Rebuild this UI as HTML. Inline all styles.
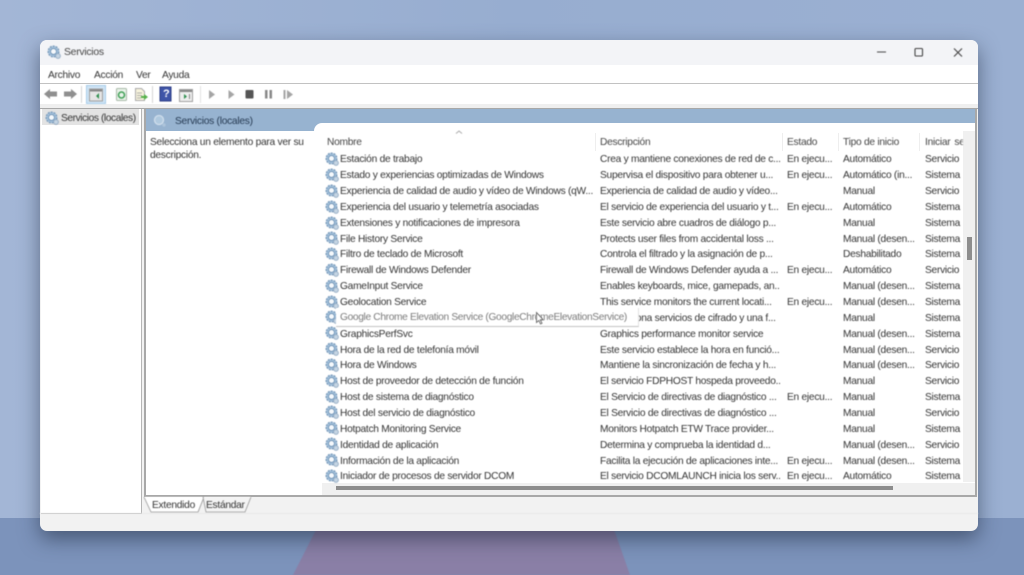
<!DOCTYPE html>
<html lang="es"><head><meta charset="utf-8"><title>Servicios</title>
<style>
html,body{margin:0;padding:0;width:1024px;height:575px;overflow:hidden}
body{position:relative;background:#9aafd1;font-family:"Liberation Sans",sans-serif;font-size:10.2px;letter-spacing:-.26px;color:#333}
div,span{position:absolute;white-space:nowrap}
#t{filter:blur(.4px)}
.c{overflow:hidden;height:14px;line-height:14px}
div[style*="left:925px"]{word-spacing:1.5px}
svg{position:absolute;overflow:visible;filter:blur(.4px)}
</style></head><body>
<div style="left:0;top:0;width:1024px;height:518px;background:linear-gradient(90deg,#a3b6d6,#97add0 50%,#9bb0d2)"></div>
<div style="left:0;top:518px;width:1024px;height:57px;background:#7c93bb"></div>
<svg style="left:0;top:0" width="1024" height="575"><polygon points="322,518 610,518 630,575 293,575" fill="#8a7fa6"/></svg>
<div style="left:40px;top:40px;width:938px;height:491px;background:#f2f2f2;border-radius:7px;box-shadow:0 8px 20px rgba(30,40,60,.55)"></div>
<div style="left:40px;top:40px;width:938px;height:25px;background:#f3f4f7;border-radius:7px 7px 0 0"></div>
<div style="left:40px;top:65px;width:938px;height:18px;background:#fff"></div>
<div style="left:40px;top:83px;width:938px;height:1px;background:#c2c2c2"></div>
<div style="left:40px;top:84px;width:938px;height:20px;background:#fff"></div>
<div style="left:40px;top:104px;width:938px;height:4px;background:#efefef"></div>
<div style="left:40px;top:108px;width:938px;height:1px;background:#a8a8a8"></div>
<div style="left:41px;top:109px;width:100px;height:404px;background:#fff;border:solid #b5b5b5;border-width:0 1px 1px 0"></div>
<div style="left:42px;top:109px;width:97px;height:16px;background:#e3e3e3"></div>
<div style="left:144px;top:108px;width:829px;height:386px;background:#fff;border:2px solid #a8a8a8;border-top-width:1px"></div>
<div style="left:146px;top:109px;width:829px;height:22px;background:#97b3d0"></div>
<div style="left:314px;top:123px;width:661px;height:30px;background:#fff;border-radius:8px 0 0 0"></div>
<div style="left:963px;top:131px;width:12px;height:351px;background:#f0f0f0"></div>
<div style="left:967px;top:237px;width:5px;height:23px;background:#8d8d8d"></div>
<div style="left:322px;top:483px;width:653px;height:12px;background:#f0f0f0"></div>
<div style="left:336px;top:486px;width:557px;height:4px;background:#8d8d8d"></div>
<div style="left:595px;top:133px;width:1px;height:18px;background:#eee"></div>
<div style="left:782px;top:133px;width:1px;height:18px;background:#eee"></div>
<div style="left:838px;top:133px;width:1px;height:18px;background:#eee"></div>
<div style="left:919px;top:133px;width:1px;height:18px;background:#eee"></div>

<svg style="left:0;top:0" width="1024" height="575">
<defs><g id="g">
<circle cx="6.5" cy="6.500" r="5.300" fill="#a8c5df" stroke="#7b9cbc" stroke-width="1.500" stroke-dasharray="2 1"/>
<circle cx="6.500" cy="6.500" r="3" fill="#f6f9fc" stroke="#6f93b5" stroke-width=".9"/>
<circle cx="11" cy="11" r="2.400" fill="#c4d4e3" stroke="#8ea6be" stroke-width=".8"/>
</g></defs>
<use href="#g" x="47" y="45"/>
<use href="#g" x="45" y="111"/>
<g opacity=".75"><circle cx="159" cy="120" r="4.500" fill="#b9d0e4" stroke="#e4eef6" stroke-width="1.300"/><circle cx="164" cy="125" r="1.700" fill="#b4cade"/></g>
<use href="#g" x="325" y="152"/><use href="#g" x="325" y="168"/><use href="#g" x="325" y="184"/><use href="#g" x="325" y="200"/><use href="#g" x="325" y="216"/><use href="#g" x="325" y="231"/><use href="#g" x="325" y="247"/><use href="#g" x="325" y="263"/><use href="#g" x="325" y="279"/><use href="#g" x="325" y="295"/><use href="#g" x="325" y="310"/><use href="#g" x="325" y="326"/><use href="#g" x="325" y="342"/><use href="#g" x="325" y="358"/><use href="#g" x="325" y="374"/><use href="#g" x="325" y="390"/><use href="#g" x="325" y="405"/><use href="#g" x="325" y="421"/><use href="#g" x="325" y="437"/><use href="#g" x="325" y="453"/><use href="#g" x="325" y="469"/>
<path d="M456 133.500l3-2.500 3 2.500" fill="none" stroke="#aaa"/>
<path d="M877 52h9" stroke="#555" stroke-width="1.100"/>
<rect x="915" y="48.500" width="7.500" height="7.500" rx="1" fill="none" stroke="#444" stroke-width="1.100"/>
<path d="M954 48.500l8 8M962 48.500l-8 8" stroke="#444" stroke-width="1.100"/>
<path d="M44 94l6-5v2.500h7v5h-7V99z" fill="#8f8f8f"/>
<path d="M77 94l-6-5v2.500h-7v5h7V99z" fill="#8f8f8f"/>
<path d="M81.500 86v17" stroke="#d5d5d5"/>
<rect x="86.500" y="85.500" width="19" height="18" fill="#cfe4f5" stroke="#a8cce8"/>
<rect x="89.500" y="89" width="13" height="12" fill="#e5e5e5" stroke="#9f9f9f"/><path d="M90 90.500h12" stroke="#888" stroke-width="2"/><path d="M99 93v6l-3-3z" fill="#2f8f4f"/>
<rect x="116.500" y="88.500" width="10" height="12" rx="1" fill="#e9f3e9" stroke="#a9b9a9"/><circle cx="121.500" cy="95" r="3" fill="none" stroke="#3f9f55" stroke-width="1.500"/>
<path d="M135.500 88.500h6l3 3v9h-9z" fill="#f7f3dd" stroke="#aaa"/><path d="M137 93h5M137 95.500h5M137 98h4" stroke="#999" stroke-width=".7"/><path d="M141 96h3v-2l4 3-4 3v-2h-3z" fill="#55b04a"/>
<path d="M152.500 86v17" stroke="#d5d5d5"/>
<rect x="160" y="87" width="11" height="14" fill="#3f55a8" stroke="#2d3d86"/>
<rect x="179.500" y="89.500" width="13" height="12" fill="#eee" stroke="#9f9f9f"/><path d="M180 91h12" stroke="#888" stroke-width="2"/><path d="M184 94v5l3-2.500z" fill="#2f8f4f"/><path d="M189.500 94v5" stroke="#888"/>
<path d="M200.500 86v17" stroke="#e2e2e2"/>
<path d="M209 90v9l6-4.500z" fill="#a5a5a5"/>
<path d="M228.500 90v9l6-4.500z" fill="#a5a5a5"/>
<rect x="245.500" y="90" width="8" height="8.500" rx="1" fill="#555"/>
<path d="M265 90h2.500v8.500H265zM269.500 90h2.500v8.500h-2.500z" fill="#888"/>
<path d="M283.500 90h2v9h-2zM287 90v9l6-4.500z" fill="#a5a5a5"/>
<path d="M198 512L204 497" fill="none" stroke="#999" stroke-width=".8"/>
<path d="M144 497l7 15h47l6-15z" fill="#fff"/>
<path d="M144 497l7 15h47l6-15" fill="none" stroke="#999" stroke-width=".8"/>
<path d="M204 497l-1 0 3 15h39l6-15" fill="#f4f4f4" stroke="#999" stroke-width=".8"/>
<path d="M40 513.500h938" stroke="#e8e8e8"/>
</svg>

<div id="t" style="left:0;top:1px;width:1024px;height:574px">
<span style="left:64px;top:45px;font-size:10.400px;line-height:13px;color:#444">Servicios</span>
<span style="left:48px;top:68px;line-height:13px">Archivo</span><span style="left:94px;top:68px;line-height:13px">Acción</span><span style="left:136px;top:68px;line-height:13px">Ver</span><span style="left:162px;top:68px;line-height:13px">Ayuda</span>
<span style="left:163px;top:86px;color:#fff;font-weight:bold;font-size:11px;line-height:14px">?</span>
<span style="left:61px;top:111px;line-height:14px;letter-spacing:-.42px">Servicios (locales)</span>
<span style="left:175px;top:114px;line-height:14px;color:#263a52">Servicios (locales)</span>
<span style="left:150px;top:135px;line-height:13px">Selecciona un elemento para ver su</span>
<span style="left:150px;top:148px;line-height:13px">descripción.</span>
<span style="left:327px;top:135px;line-height:14px;color:#444">Nombre</span><span style="left:600px;top:135px;line-height:14px;color:#444">Descripción</span><span style="left:787px;top:135px;line-height:14px;color:#444">Estado</span><span style="left:843px;top:135px;line-height:14px;color:#444">Tipo de inicio</span><div class="c" style="left:925px;top:135px;width:38px;color:#444">Iniciar sesión</div>

<div class="c" style="left:340px;top:152px;width:255px">Estación de trabajo</div><div class="c" style="left:600px;top:152px;width:180px">Crea y mantiene conexiones de red de c...</div><span style="left:787px;top:152px;line-height:14px">En ejecu...</span><span style="left:843px;top:152px;line-height:14px">Automático</span><div class="c" style="left:925px;top:152px;width:38px">Servicio de red</div>
<div class="c" style="left:340px;top:168px;width:255px">Estado y experiencias optimizadas de Windows</div><div class="c" style="left:600px;top:168px;width:180px">Supervisa el dispositivo para obtener u...</div><span style="left:787px;top:168px;line-height:14px">En ejecu...</span><span style="left:843px;top:168px;line-height:14px">Automático (in...</span><div class="c" style="left:925px;top:168px;width:38px">Sistema local</div>
<div class="c" style="left:340px;top:184px;width:255px">Experiencia de calidad de audio y vídeo de Windows (qW...</div><div class="c" style="left:600px;top:184px;width:180px">Experiencia de calidad de audio y vídeo...</div><span style="left:843px;top:184px;line-height:14px">Manual</span><div class="c" style="left:925px;top:184px;width:38px">Servicio local</div>
<div class="c" style="left:340px;top:200px;width:255px">Experiencia del usuario y telemetría asociadas</div><div class="c" style="left:600px;top:200px;width:180px">El servicio de experiencia del usuario y t...</div><span style="left:787px;top:200px;line-height:14px">En ejecu...</span><span style="left:843px;top:200px;line-height:14px">Automático</span><div class="c" style="left:925px;top:200px;width:38px">Sistema local</div>
<div class="c" style="left:340px;top:216px;width:255px">Extensiones y notificaciones de impresora</div><div class="c" style="left:600px;top:216px;width:180px">Este servicio abre cuadros de diálogo p...</div><span style="left:843px;top:216px;line-height:14px">Manual</span><div class="c" style="left:925px;top:216px;width:38px">Sistema local</div>
<div class="c" style="left:340px;top:232px;width:255px">File History Service</div><div class="c" style="left:600px;top:232px;width:180px">Protects user files from accidental loss ...</div><span style="left:843px;top:232px;line-height:14px">Manual (desen...</span><div class="c" style="left:925px;top:232px;width:38px">Sistema local</div>
<div class="c" style="left:340px;top:247px;width:255px">Filtro de teclado de Microsoft</div><div class="c" style="left:600px;top:247px;width:180px">Controla el filtrado y la asignación de p...</div><span style="left:843px;top:247px;line-height:14px">Deshabilitado</span><div class="c" style="left:925px;top:247px;width:38px">Sistema local</div>
<div class="c" style="left:340px;top:263px;width:255px">Firewall de Windows Defender</div><div class="c" style="left:600px;top:263px;width:180px">Firewall de Windows Defender ayuda a ...</div><span style="left:787px;top:263px;line-height:14px">En ejecu...</span><span style="left:843px;top:263px;line-height:14px">Automático</span><div class="c" style="left:925px;top:263px;width:38px">Servicio local</div>
<div class="c" style="left:340px;top:279px;width:255px">GameInput Service</div><div class="c" style="left:600px;top:279px;width:180px">Enables keyboards, mice, gamepads, an...</div><span style="left:843px;top:279px;line-height:14px">Manual (desen...</span><div class="c" style="left:925px;top:279px;width:38px">Sistema local</div>
<div class="c" style="left:340px;top:295px;width:255px">Geolocation Service</div><div class="c" style="left:600px;top:295px;width:180px">This service monitors the current locati...</div><span style="left:787px;top:295px;line-height:14px">En ejecu...</span><span style="left:843px;top:295px;line-height:14px">Manual (desen...</span><div class="c" style="left:925px;top:295px;width:38px">Sistema local</div>
<div class="c" style="left:600px;top:311px;width:180px">Proporciona servicios de cifrado y una f...</div><span style="left:843px;top:311px;line-height:14px">Manual</span><div class="c" style="left:925px;top:311px;width:38px">Sistema local</div>
<div class="c" style="left:340px;top:327px;width:255px">GraphicsPerfSvc</div><div class="c" style="left:600px;top:327px;width:180px">Graphics performance monitor service</div><span style="left:843px;top:327px;line-height:14px">Manual (desen...</span><div class="c" style="left:925px;top:327px;width:38px">Sistema local</div>
<div class="c" style="left:340px;top:343px;width:255px">Hora de la red de telefonía móvil</div><div class="c" style="left:600px;top:343px;width:180px">Este servicio establece la hora en funció...</div><span style="left:843px;top:343px;line-height:14px">Manual (desen...</span><div class="c" style="left:925px;top:343px;width:38px">Servicio local</div>
<div class="c" style="left:340px;top:358px;width:255px">Hora de Windows</div><div class="c" style="left:600px;top:358px;width:180px">Mantiene la sincronización de fecha y h...</div><span style="left:843px;top:358px;line-height:14px">Manual (desen...</span><div class="c" style="left:925px;top:358px;width:38px">Servicio local</div>
<div class="c" style="left:340px;top:374px;width:255px">Host de proveedor de detección de función</div><div class="c" style="left:600px;top:374px;width:180px">El servicio FDPHOST hospeda proveedo...</div><span style="left:843px;top:374px;line-height:14px">Manual</span><div class="c" style="left:925px;top:374px;width:38px">Servicio local</div>
<div class="c" style="left:340px;top:390px;width:255px">Host de sistema de diagnóstico</div><div class="c" style="left:600px;top:390px;width:180px">El Servicio de directivas de diagnóstico ...</div><span style="left:787px;top:390px;line-height:14px">En ejecu...</span><span style="left:843px;top:390px;line-height:14px">Manual</span><div class="c" style="left:925px;top:390px;width:38px">Sistema local</div>
<div class="c" style="left:340px;top:406px;width:255px">Host del servicio de diagnóstico</div><div class="c" style="left:600px;top:406px;width:180px">El Servicio de directivas de diagnóstico ...</div><span style="left:843px;top:406px;line-height:14px">Manual</span><div class="c" style="left:925px;top:406px;width:38px">Servicio local</div>
<div class="c" style="left:340px;top:422px;width:255px">Hotpatch Monitoring Service</div><div class="c" style="left:600px;top:422px;width:180px">Monitors Hotpatch ETW Trace provider...</div><span style="left:843px;top:422px;line-height:14px">Manual</span><div class="c" style="left:925px;top:422px;width:38px">Sistema local</div>
<div class="c" style="left:340px;top:438px;width:255px">Identidad de aplicación</div><div class="c" style="left:600px;top:438px;width:180px">Determina y comprueba la identidad d...</div><span style="left:843px;top:438px;line-height:14px">Manual (desen...</span><div class="c" style="left:925px;top:438px;width:38px">Servicio local</div>
<div class="c" style="left:340px;top:454px;width:255px">Información de la aplicación</div><div class="c" style="left:600px;top:454px;width:180px">Facilita la ejecución de aplicaciones inte...</div><span style="left:787px;top:454px;line-height:14px">En ejecu...</span><span style="left:843px;top:454px;line-height:14px">Manual (desen...</span><div class="c" style="left:925px;top:454px;width:38px">Sistema local</div>
<div class="c" style="left:340px;top:469px;width:255px">Iniciador de procesos de servidor DCOM</div><div class="c" style="left:600px;top:469px;width:180px">El servicio DCOMLAUNCH inicia los serv...</div><span style="left:787px;top:469px;line-height:14px">En ejecu...</span><span style="left:843px;top:469px;line-height:14px">Automático</span><div class="c" style="left:925px;top:469px;width:38px">Sistema local</div>

<div style="left:336px;top:307px;width:302px;height:18px;background:#fff;border-right:1px solid #e2e2e2;border-bottom:1px solid #c4c4c4"></div>
<span style="left:340px;top:310px;line-height:14px;color:#7b7b7b;letter-spacing:-.34px">Google Chrome Elevation Service (GoogleChromeElevationService)</span>
<span style="left:152px;top:498px;line-height:14px">Extendido</span>
<span style="left:206px;top:498px;line-height:14px">Estándar</span>
</div>
<svg style="left:0;top:0" width="1024" height="575"><path d="M536.500 312.500v10l2.300-2 1.700 3.500 1.500-.7-1.700-3.500h3z" fill="#fff" stroke="#555" stroke-width=".8"/></svg>
</body></html>
